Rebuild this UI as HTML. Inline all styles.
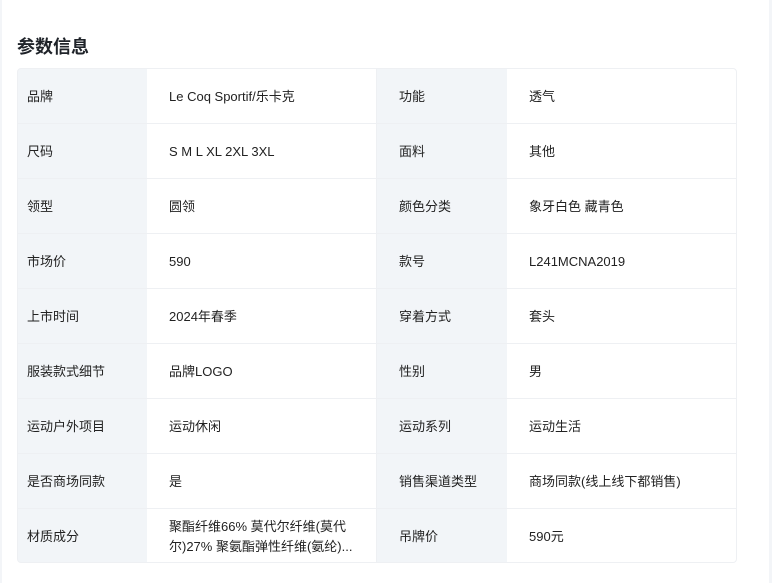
<!DOCTYPE html>
<html><head><meta charset="utf-8"><style>
body{margin:0;width:772px;height:583px;background:#fff;font-family:"Liberation Sans","Noto Sans CJK SC",sans-serif;position:relative;overflow:hidden}
.edge{position:absolute;left:0;top:0;width:2px;height:583px;background:#f3f5f8}
.redge{position:absolute;right:0;top:0;width:3px;height:583px;background:#f3f5f8}
h1{position:absolute;left:17px;top:35px;margin:0;font-size:18px;font-weight:bold;color:#1f2329;line-height:24px}
.t{position:absolute;left:17px;top:68px;width:718px;height:493px;border:1px solid #eef0f3;border-radius:4px;overflow:hidden;background:#eef0f3}
.r{display:flex;height:54px;margin-bottom:1px}
.c{display:flex;align-items:center;font-size:13px;color:#222;line-height:20px;padding-top:1px}
.l{background:#f2f5f8;width:129px;padding-left:9px;box-sizing:border-box}
.v{background:#fff;width:229px;padding-left:22px;box-sizing:border-box}
.l2{width:130px;margin-left:1px;padding-left:22px}
.v2{width:229px}
</style></head><body>
<div class="edge"></div><div class="redge"></div>
<h1>参数信息</h1>
<div class="t">
<div class="r"><div class="c l">品牌</div><div class="c v">Le Coq Sportif/乐卡克</div><div class="c l l2">功能</div><div class="c v v2">透气</div></div>
<div class="r"><div class="c l">尺码</div><div class="c v">S M L XL 2XL 3XL</div><div class="c l l2">面料</div><div class="c v v2">其他</div></div>
<div class="r"><div class="c l">领型</div><div class="c v">圆领</div><div class="c l l2">颜色分类</div><div class="c v v2">象牙白色 藏青色</div></div>
<div class="r"><div class="c l">市场价</div><div class="c v">590</div><div class="c l l2">款号</div><div class="c v v2">L241MCNA2019</div></div>
<div class="r"><div class="c l">上市时间</div><div class="c v">2024年春季</div><div class="c l l2">穿着方式</div><div class="c v v2">套头</div></div>
<div class="r"><div class="c l">服装款式细节</div><div class="c v">品牌LOGO</div><div class="c l l2">性别</div><div class="c v v2">男</div></div>
<div class="r"><div class="c l">运动户外项目</div><div class="c v">运动休闲</div><div class="c l l2">运动系列</div><div class="c v v2">运动生活</div></div>
<div class="r"><div class="c l">是否商场同款</div><div class="c v">是</div><div class="c l l2">销售渠道类型</div><div class="c v v2">商场同款(线上线下都销售)</div></div>
<div class="r"><div class="c l">材质成分</div><div class="c v" style="padding-right:16px">聚酯纤维66% 莫代尔纤维(莫代尔)27% 聚氨酯弹性纤维(氨纶)...</div><div class="c l l2">吊牌价</div><div class="c v v2">590元</div></div>
</div>
</body></html>
